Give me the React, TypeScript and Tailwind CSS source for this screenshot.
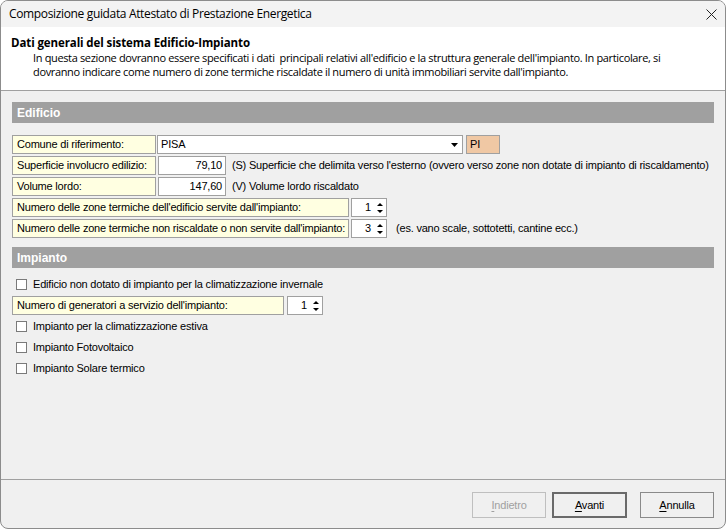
import React from "react";

const ui = "font-['Liberation_Sans',Arial,sans-serif] text-[11px] tracking-[-0.2px] text-black";

function LabelBox({ w, children }: { w: string; children: React.ReactNode }) {
  return (
    <div className={`${w} h-[19px] shrink-0 whitespace-nowrap border border-[#a0a0a0] bg-[#ffffe1] px-[4px] flex items-center`}>
      {children}
    </div>
  );
}

function Spin({ value, w = "w-[36px]" }: { value: string; w?: string }) {
  return (
    <div className={`${w} h-[19px] shrink-0 border border-[#a0a0a0] bg-white flex items-center`}>
      <span className="flex-1 text-right pr-[3px]">{value}</span>
      <div className="w-[12px] h-full flex flex-col items-center justify-center gap-[4px] pr-[1px]">
        <svg width="6" height="3" viewBox="0 0 6 3">
          <path d="M3 0L6 3H0z" fill="#000" />
        </svg>
        <svg width="6" height="3" viewBox="0 0 6 3">
          <path d="M0 0h6L3 3z" fill="#000" />
        </svg>
      </div>
    </div>
  );
}

function Check({ label }: { label: string }) {
  return (
    <div className="h-[21px] flex items-center gap-[6px] pl-[4px] whitespace-nowrap">
      <div className="w-[11px] h-[11px] border border-[#7a7a7a] bg-white" />
      <span>{label}</span>
    </div>
  );
}

function SectionBar({ title }: { title: string }) {
  return (
    <div className="h-[21px] bg-[#a0a0a0] flex items-center px-[5px] text-white font-bold text-[12px] tracking-normal">
      {title}
    </div>
  );
}

export default function App() {
  return (
    <div className={`${ui} w-[726px] h-[529px] flex flex-col overflow-hidden rounded-lg border border-[#8c8c8c] bg-[#f0f0f0]`}>
      {/* Title bar */}
      <div className="h-[26px] shrink-0 bg-[#f3f3f3] flex items-center justify-between pl-[8px] pr-[8px]">
        <span className="text-[12px] font-['Open_Sans',sans-serif] tracking-[-0.35px] whitespace-nowrap">
          Composizione guidata Attestato di Prestazione Energetica
        </span>
        <svg width="11" height="11" viewBox="0 0 11 11">
          <path d="M0.5 0.5L10.5 10.5M10.5 0.5L0.5 10.5" stroke="#222" strokeWidth="1" />
        </svg>
      </div>

      {/* Header */}
      <div className="h-[64px] shrink-0 bg-white border-b border-[#a0a0a0] pl-[10px] pr-[10px] pt-[9px] font-['Open_Sans',sans-serif] text-[11px] leading-[14px]">
        <div className="font-bold text-[11.5px] mb-[1px] tracking-[-0.1px]">Dati generali del sistema Edificio-Impianto</div>
        <div className="pl-[22px] tracking-[-0.35px]">
          <div className="whitespace-nowrap">
            In questa sezione dovranno essere specificati i dati&nbsp; principali relativi all'edificio e la struttura
            generale dell'impianto. In particolare, si
          </div>
          <div className="whitespace-nowrap">
            dovranno indicare come numero di zone termiche riscaldate il numero di unità immobiliari servite
            dall'impianto.
          </div>
        </div>
      </div>

      {/* Body */}
      <div className="flex-1 px-[11px] pt-[11px]">
        <SectionBar title="Edificio" />
        <div className="mt-[12px] flex flex-col gap-[2px] whitespace-nowrap">
          <div className="flex items-center">
            <LabelBox w="w-[144px]">Comune di riferimento:</LabelBox>
            <div className="ml-[1px] w-[306px] h-[19px] border border-[#a0a0a0] bg-white flex items-center pl-[3px]">
              <span className="flex-1">PISA</span>
              <div className="w-[15px] flex justify-center">
                <svg width="7" height="4" viewBox="0 0 7 4">
                  <path d="M0 0h7L3.5 4z" fill="#000" />
                </svg>
              </div>
            </div>
            <div className="ml-[3px] w-[34px] h-[19px] border border-[#a0a0a0] bg-[#f0c8a4] flex items-center pl-[3px]">
              PI
            </div>
          </div>
          <div className="flex items-center">
            <LabelBox w="w-[144px]">Superficie involucro edilizio:</LabelBox>
            <div className="ml-[2px] w-[68px] h-[19px] border border-[#a0a0a0] bg-white flex items-center justify-end pr-[3px]">
              79,10
            </div>
            <span className="ml-[6px]">
              (S) Superficie che delimita verso l'esterno (ovvero verso zone non dotate di impianto di riscaldamento)
            </span>
          </div>
          <div className="flex items-center">
            <LabelBox w="w-[144px]">Volume lordo:</LabelBox>
            <div className="ml-[2px] w-[68px] h-[19px] border border-[#a0a0a0] bg-white flex items-center justify-end pr-[3px]">
              147,60
            </div>
            <span className="ml-[6px]">(V) Volume lordo riscaldato</span>
          </div>
          <div className="flex items-center">
            <LabelBox w="w-[337px]">Numero delle zone termiche dell'edificio servite dall'impianto:</LabelBox>
            <div className="ml-[2px]">
              <Spin value="1" />
            </div>
          </div>
          <div className="flex items-center">
            <LabelBox w="w-[337px]">Numero delle zone termiche non riscaldate o non servite dall'impianto:</LabelBox>
            <div className="ml-[2px]">
              <Spin value="3" />
            </div>
            <span className="ml-[9px]">(es. vano scale, sottotetti, cantine ecc.)</span>
          </div>
        </div>

        <div className="mt-[9px]">
          <SectionBar title="Impianto" />
        </div>
        <div className="mt-[6px] flex flex-col">
          <Check label="Edificio non dotato di impianto per la climatizzazione invernale" />
          <div className="flex items-center my-[1px]">
            <LabelBox w="w-[272px]">Numero di generatori a servizio dell'impianto:</LabelBox>
            <div className="ml-[3px]">
              <Spin value="1" />
            </div>
          </div>
          <Check label="Impianto per la climatizzazione estiva" />
          <Check label="Impianto Fotovoltaico" />
          <Check label="Impianto Solare termico" />
        </div>
      </div>

      {/* Footer */}
      <div className="h-[49px] shrink-0 border-t border-[#a0a0a0] flex items-start justify-end gap-[6px] pt-[12px] pr-[11px]">
        <button className="w-[74px] h-[26px] border border-[#bfbfbf] bg-[#f0f0f0] text-[#a0a0a0]">
          <span className="underline underline-offset-2">I</span>ndietro
        </button>
        <button className="w-[75px] h-[26px] border-2 border-[#6a6a6a] bg-[#f0f0f0]">
          <span className="underline underline-offset-2">A</span>vanti
        </button>
        <button className="ml-[7px] w-[74px] h-[26px] border border-[#8a8a8a] bg-[#f0f0f0]">
          <span className="underline underline-offset-2">A</span>nnulla
        </button>
      </div>
    </div>
  );
}
